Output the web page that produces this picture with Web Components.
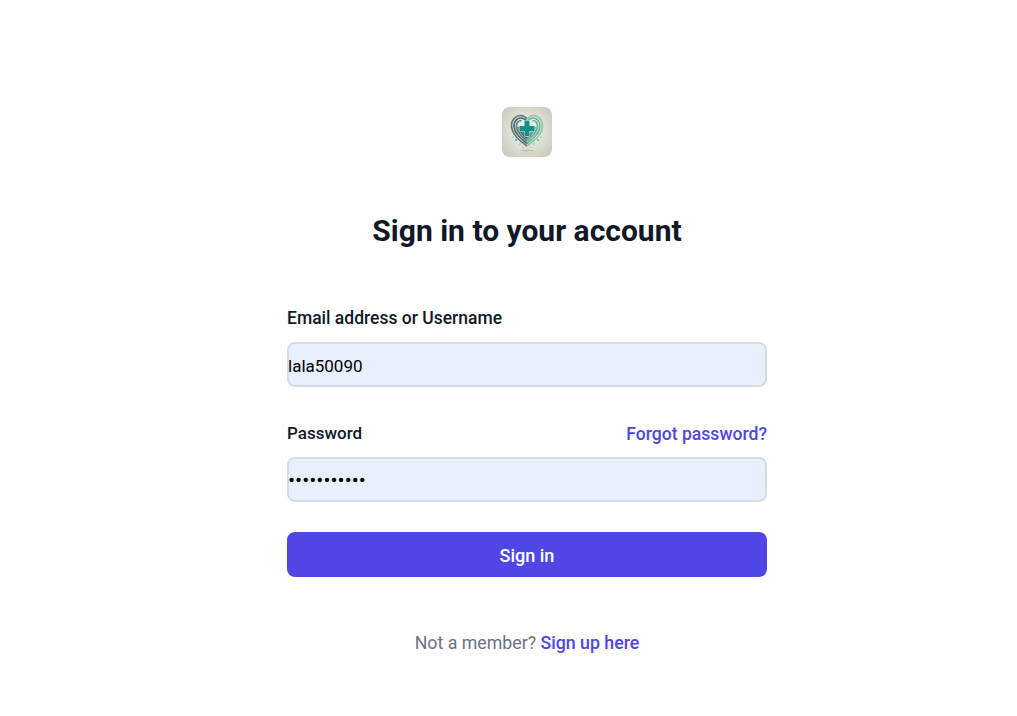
<!DOCTYPE html>
<html lang="en"><head><meta charset="utf-8"><title>Sign in</title>
<style>
html,body{margin:0;padding:0;background:#fff}
body{font-family:Roboto,"Noto Sans",sans-serif}
</style></head><body>
<signin-page></signin-page>
<script>
class AppLogo extends HTMLElement{constructor(){super();this.attachShadow({mode:'open'}).innerHTML=`
<style>:host{display:block;width:50px;height:50px;border-radius:8px;overflow:hidden}svg{display:block}</style>
<svg width="50" height="50" viewBox="0 0 50 50">
<defs><radialGradient id="bg" cx="50%" cy="48%" r="70%"><stop offset="0" stop-color="#f2f4ee"/><stop offset=".5" stop-color="#dfe0d5"/><stop offset="1" stop-color="#c5c6b5"/></radialGradient></defs>
<rect width="50" height="50" fill="url(#bg)"/>
<ellipse cx="25" cy="22" rx="15" ry="14" fill="#dfeee8"/>
<g fill="none" stroke-width="1.7">
<path d="M25 39C17 33 9.500 27 9.500 18.500C9.500 12.500 14 8.500 18.500 8.500C21.500 8.500 23.500 10 25 12" stroke="#5d7776"/>
<path d="M25 36.500C18.500 31 12 26 12 18.800C12 14 15.500 11 18.800 11C21.300 11 23.200 12.300 25 14.500" stroke="#4b676b"/>
<path d="M25 34C20 29.500 14.500 25 14.500 19C14.500 15.500 17 13.500 19.500 13.500" stroke="#5d7776"/>
<path d="M25 31.500C21 28 17 24.500 17 20" stroke="#4b676b"/>
<path d="M25 29C22.500 27 19.500 24 19.500 21.500" stroke="#5d7776"/>
<path d="M25 39C33 33 40.500 27 40.500 18.500C40.500 12.500 36 8.500 31.500 8.500C28.500 8.500 26.500 10 25 12" stroke="#8cc4a8"/>
<path d="M25 36.500C31.500 31 38 26 38 18.800C38 14 34.500 11 31.200 11C28.700 11 26.800 12.300 25 14.500" stroke="#70b298"/>
<path d="M25 34C30 29.500 35.500 25 35.500 19C35.500 15.500 33 13.500 30.500 13.500" stroke="#6aa898"/>
<path d="M25 31.500C29 28 33 24.500 33 20" stroke="#5a9890"/>
<path d="M25 29C27.500 27 30.500 24 30.500 21.500" stroke="#6aa898"/>
</g>
<path d="M22.500 14h5v5h5v5h-5v5h-5v-5h-5v-5h5z" fill="#12908c" stroke="#eaf3ee" stroke-width=".8" paint-order="stroke"/>
<g fill="#3d9c95"><circle cx="14" cy="33" r=".9"/><circle cx="11" cy="30" r=".6"/><circle cx="36" cy="33" r=".9"/><circle cx="39" cy="30" r=".6"/><circle cx="18" cy="37" r=".7"/><circle cx="32" cy="37" r=".7"/><circle cx="21" cy="40" r=".5"/><circle cx="29" cy="40" r=".5"/></g>
<ellipse cx="25" cy="43.500" rx="7" ry=".8" fill="#b9bbac"/>
</svg>`}}
customElements.define('app-logo',AppLogo);

class FormField extends HTMLElement{constructor(){super();this.attachShadow({mode:'open'}).innerHTML=`
<style>
:host{display:block}
.head{display:flex;justify-content:space-between;align-items:flex-end;height:25px;margin-bottom:12px;font-size:17.500px;font-weight:500;color:#111827;line-height:24px}
.box{box-sizing:border-box;height:45px;padding-top:2px;border:2px solid #d6dbe6;border-radius:8px;background:#e8f0fe;display:flex;align-items:center;color:#000;font-size:17px;overflow:hidden}
.val{margin-left:-1px;white-space:nowrap}
::slotted([slot=aside]){position:relative;top:1px}
</style>
<div class="head"><slot name="label"></slot><slot name="aside"></slot></div>
<div class="box"><div class="val"><slot></slot></div></div>`}}
customElements.define('form-field',FormField);

class SubmitButton extends HTMLElement{constructor(){super();this.attachShadow({mode:'open'}).innerHTML=`
<style>:host{display:flex;box-sizing:border-box;height:45px;padding-top:2px;align-items:center;justify-content:center;background:#4f46e5;color:#fff;border-radius:8px;font-size:18px;font-weight:500;cursor:pointer}</style><slot></slot>`}}
customElements.define('submit-button',SubmitButton);

class TextLink extends HTMLElement{constructor(){super();this.attachShadow({mode:'open'}).innerHTML=`
<style>:host{display:inline;color:#4f46e5;font-weight:500;cursor:pointer}</style><slot></slot>`}}
customElements.define('text-link',TextLink);

class SigninPage extends HTMLElement{constructor(){super();this.attachShadow({mode:'open'}).innerHTML=`
<style>
:host{display:block;box-sizing:border-box;min-height:716px;padding:107px 0 0 37px;font-family:Roboto,"Noto Sans",sans-serif}
.wrap{display:flex;flex-direction:column;align-items:center}
h1{margin:42px 0 0;font-size:30px;line-height:64px;font-weight:700;color:#111827;white-space:nowrap}
form{width:480px;margin-top:42px;display:flex;flex-direction:column}
form-field+form-field{margin-top:33px}
submit-button{margin-top:30px}
.foot{margin-top:52px;font-size:17.750px;line-height:28px;color:#6b7280;white-space:nowrap}
.aside{font-size:17.600px}
.pw{font-size:17px}
.dots{font-size:21px;line-height:20px}
</style>
<div class="wrap">
<app-logo></app-logo>
<h1>Sign in to your account</h1>
<form onsubmit="return false">
<form-field><span slot="label">Email address or Username</span>lala50090</form-field>
<form-field><span slot="label" class="pw">Password</span><text-link slot="aside" class="aside">Forgot password?</text-link><span class="dots">•••••••••••</span></form-field>
<submit-button>Sign in</submit-button>
</form>
<div class="foot">Not a member? <text-link>Sign up here</text-link></div>
</div>`}}
customElements.define('signin-page',SigninPage);
</script>
</body></html>
